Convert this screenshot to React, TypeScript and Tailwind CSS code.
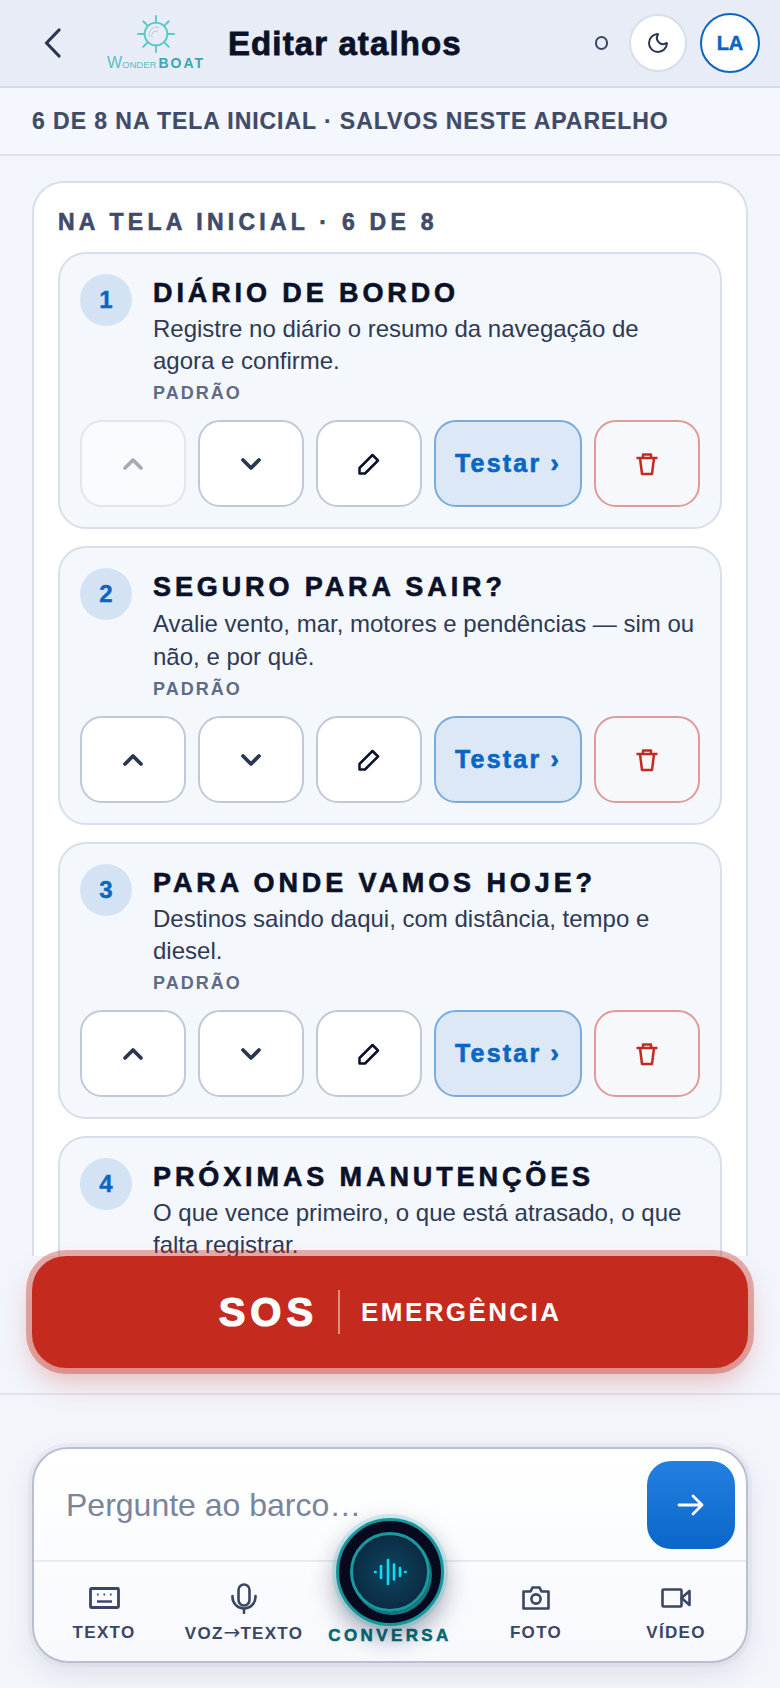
import React from "react";
import { ChevronUp, ChevronDown, Moon } from "lucide-react";

interface Shortcut {
  id: number;
  title: string;
  description: React.ReactNode;
}

const shortcuts: Shortcut[] = [
  { id: 1, title: "DIÁRIO DE BORDO", description: "Registre no diário o resumo da navegação de agora e confirme." },
  {
    id: 2,
    title: "SEGURO PARA SAIR?",
    description: (
      <>
        Avalie vento, mar, motores e pendências <span className="leading-[34px]">—</span> sim ou não, e por quê.
      </>
    ),
  },
  { id: 3, title: "PARA ONDE VAMOS HOJE?", description: "Destinos saindo daqui, com distância, tempo e diesel." },
  { id: 4, title: "PRÓXIMAS MANUTENÇÕES", description: "O que vence primeiro, o que está atrasado, o que falta registrar." },
];

function Logo() {
  const spokes = [0, 45, 90, 135, 180, 225, 270, 315];
  return (
    <div className="flex w-[96px] flex-col items-center">
      <svg width="38" height="38" viewBox="0 0 40 40" fill="none" stroke="#5cc8c8" strokeWidth="2">
        <circle cx="20" cy="20" r="12" />
        {spokes.map((a) => (
          <line key={a} x1="20" y1="8" x2="20" y2="1" transform={`rotate(${a} 20 20)`} strokeLinecap="round" />
        ))}
        <path d="M13 23a8 8 0 0 1 10-10M16 24a5 5 0 0 1 6-7" stroke="#b9c6d4" strokeWidth="1" />
      </svg>
      <div className="mt-[2px] flex items-baseline whitespace-nowrap leading-none text-[#58bfc2]">
        <span className="text-[16px]">W</span>
        <span className="text-[9.5px]">ONDER</span>
        <span className="ml-[2px] text-[14px] font-bold tracking-[2px] text-[#3aa6ae]">BOAT</span>
      </div>
    </div>
  );
}

function PencilIcon() {
  return (
    <svg width="24" height="24" viewBox="0 0 24 24" fill="none" stroke="currentColor" strokeWidth="2.5" strokeLinejoin="round">
      <path d="M2.5 16 L15.5 3 L21 8.5 L8 21.5 L2.5 21.5 Z" />
    </svg>
  );
}

function TrashIcon() {
  return (
    <svg width="24" height="24" viewBox="0 0 24 24" fill="none" stroke="currentColor" strokeWidth="2.5" strokeLinejoin="round">
      <path d="M1.5 6h21M8 6V2.5h8V6M5 6l2 16h10l2-16" />
    </svg>
  );
}

function ShortcutCard({ item }: { item: Shortcut }) {
  const squareBtn = "flex h-[87px] w-[106px] shrink-0 items-center justify-center rounded-[22px] border-2";
  return (
    <div className="rounded-[28px] border-2 border-[#d8dfeb] bg-[#f4f7fc] px-[20px] pb-[20px] pt-[20px]">
      <div className="flex gap-[21px]">
        <div className="flex h-[52px] w-[52px] shrink-0 items-center justify-center rounded-full bg-[#d3e3f4] text-[24px] font-bold text-[#0a66c2] [-webkit-text-stroke:0.4px]">
          {item.id}
        </div>
        <div className="min-w-0 flex-1">
          <div className="text-[27px] font-black leading-[39px] tracking-[3.9px] text-[#0a1128] [-webkit-text-stroke:0.6px]">
            {item.title}
          </div>
          <p className="text-[24px] leading-[32px] text-[#2e3a55]">{item.description}</p>
          <div className="mt-[4px] text-[18px] font-bold leading-[24px] tracking-[2px] text-[#5f6a85]">PADRÃO</div>
        </div>
      </div>
      <div className="mt-[15px] flex gap-[12px]">
        <button className={`${squareBtn} ${item.id === 1 ? "border-[#e0e5ee] bg-[#f8fafd] text-[#a3abb9]" : "border-[#c0c9d8] bg-white text-[#2a3550]"}`}>
          <ChevronUp size={32} strokeWidth={2.8} />
        </button>
        <button className={`${squareBtn} border-[#c0c9d8] bg-white text-[#2a3550]`}>
          <ChevronDown size={32} strokeWidth={2.8} />
        </button>
        <button className={`${squareBtn} border-[#c0c9d8] bg-white text-[#0a1128]`}>
          <PencilIcon />
        </button>
        <button className="flex h-[87px] w-[148px] shrink-0 items-center justify-center rounded-[22px] border-2 border-[#7aabdc] bg-[#dce8f6] text-[25px] font-black tracking-[2.2px] text-[#0a66c2] [-webkit-text-stroke:0.6px]">
          Testar ›
        </button>
        <button className={`${squareBtn} border-[#e09a98] bg-[#f6f8fc] text-[#c42b1f]`}>
          <TrashIcon />
        </button>
      </div>
    </div>
  );
}

function KeyboardIcon() {
  return (
    <svg width="31" height="22" viewBox="0 0 31 22" fill="none" stroke="currentColor" strokeWidth="2.8">
      <rect x="1.5" y="1.5" width="28" height="19" rx="1" />
      <path d="M8 7.5h1.6M14.5 7.5h1.6M21 7.5h1.6" strokeWidth="2" />
      <path d="M8 14.5h15" strokeWidth="2.4" />
    </svg>
  );
}

function MicIcon() {
  return (
    <svg width="26" height="31" viewBox="0 0 26 31" fill="none" stroke="currentColor" strokeWidth="2.6" strokeLinecap="round">
      <rect x="7.5" y="1.5" width="11" height="21" rx="5.5" />
      <path d="M1.5 13v1a11.5 11.5 0 0 0 23 0v-1M13 25.5v4.5" />
    </svg>
  );
}

function CameraIcon() {
  return (
    <svg width="28" height="24" viewBox="0 0 28 24" fill="none" stroke="currentColor" strokeWidth="2.6" strokeLinejoin="round">
      <path d="M8.5 5.5 L10.5 1.5 H17.5 L19.5 5.5 H26.5 V22.5 H1.5 V5.5 Z" />
      <circle cx="14" cy="13" r="4.6" />
    </svg>
  );
}

function VideoIcon() {
  return (
    <svg width="30" height="20" viewBox="0 0 30 20" fill="none" stroke="currentColor" strokeWidth="2.6" strokeLinejoin="round">
      <rect x="1.5" y="1.5" width="19" height="17" rx="1" />
      <path d="M20.5 10 L28.5 3 V17 Z" />
    </svg>
  );
}

function ToolItem({ label, children }: { label: React.ReactNode; children: React.ReactNode }) {
  return (
    <div className="flex flex-col items-center">
      <div className="flex h-[40px] items-center text-[#3a4663]">{children}</div>
      <div className="mt-[4px] whitespace-nowrap text-[17px] font-bold leading-[22px] tracking-[1.3px] text-[#3a4663]">
        {label}
      </div>
    </div>
  );
}

function ConversaOrb() {
  return (
    <div className="absolute left-1/2 top-[69px] flex h-[108px] w-[108px] -translate-x-1/2 items-center justify-center rounded-full border-[3px] border-[#14979c] bg-[#070a1f] shadow-[0_0_0_4px_rgba(40,190,190,0.18),0_10px_26px_rgba(10,20,50,0.4)]">
      <div className="flex h-[80px] w-[80px] items-center justify-center rounded-full border-[3px] border-[#1a9a9e] bg-[radial-gradient(circle,#0d4560_0%,#0a2238_100%)] shadow-[2px_3px_0_#127a80]">
        <svg width="34" height="28" viewBox="0 0 34 28" stroke="#05e0f5" strokeWidth="2.6" strokeLinecap="round">
          <path d="M2 14h.6M8 8v12M15 2v24M21 6.500v15M27 10v8M32 14h.6" />
        </svg>
      </div>
    </div>
  );
}

export default function App() {
  return (
    <div className="flex h-[1688px] w-[780px] flex-col overflow-hidden bg-[#f2f5fc] font-['Liberation_Sans',Arial,sans-serif]">
      <header className="flex h-[88px] shrink-0 items-center border-b-2 border-[#d6dbe8] bg-[#e8ecf6] pl-[44px] pr-[20px]">
        <svg width="17" height="30" viewBox="0 0 17 30" fill="none" stroke="#2a3550" strokeWidth="3.2" strokeLinecap="round" strokeLinejoin="round">
          <path d="M15 2 L2.500 15 L15 28" />
        </svg>
        <div className="ml-[47px]">
          <Logo />
        </div>
        <h1 className="ml-[24px] text-[33px] font-black leading-none tracking-[1.1px] text-[#0a1128] [-webkit-text-stroke:0.8px]">Editar atalhos</h1>
        <div className="ml-auto h-[14px] w-[13px] rounded-full border-[2.5px] border-[#3a4663]" />
        <button className="ml-[21px] flex h-[58px] w-[58px] items-center justify-center rounded-full border-2 border-[#d8deea] bg-white text-[#2a3550]">
          <Moon size={24} strokeWidth={2} />
        </button>
        <button className="ml-[13px] flex h-[60px] w-[60px] items-center justify-center rounded-full border-[2.5px] border-[#0a66c2] bg-white text-[20px] font-bold text-[#0a66c2] [-webkit-text-stroke:0.5px]">
          LA
        </button>
      </header>

      <div className="flex h-[68px] shrink-0 items-center border-b-2 border-[#dde2ed] bg-[#f4f7fe] px-[32px] text-[23px] font-bold tracking-[0.95px] text-[#3f4b68] [-webkit-text-stroke:0.2px]">
        6 DE 8 NA TELA INICIAL · SALVOS NESTE APARELHO
      </div>

      <main className="min-h-0 flex-1 overflow-hidden px-[32px] pt-[25px]">
        <section className="rounded-[32px] border-2 border-[#d8dfeb] bg-white px-[24px] pt-[26px]">
          <div className="text-[23px] font-black leading-[26px] tracking-[4.25px] text-[#3f4b68] [-webkit-text-stroke:0.6px]">
            NA TELA INICIAL · 6 DE 8
          </div>
          <div className="mt-[17px] flex flex-col gap-[17px]">
            {shortcuts.map((item) => (
              <ShortcutCard key={item.id} item={item} />
            ))}
          </div>
        </section>
      </main>

      <div className="relative z-10 shrink-0 px-[32px]">
        <button className="flex h-[112px] w-full items-center justify-center rounded-[34px] bg-[#c42b1e] text-white shadow-[0_0_0_6px_rgba(196,43,30,0.36),0_14px_28px_rgba(196,43,30,0.28)]">
          <span className="text-[40px] font-black leading-none tracking-[5px] [-webkit-text-stroke:1.2px]">SOS</span>
          <span className="ml-[20px] mr-[21px] h-[44px] w-[2px] bg-[#e58d84]" />
          <span className="text-[26px] font-bold tracking-[2.4px]">EMERGÊNCIA</span>
        </button>
      </div>

      <footer className="mt-[25px] h-[295px] shrink-0 border-t-2 border-[#dfe3ee] bg-[#f3f5fb] px-[32px] pt-[52px]">
        <div className="relative h-[216px] rounded-[36px] border-2 border-[#b9bfcf] bg-[linear-gradient(#ffffff,#f7f9fd)] shadow-[0_0_0_4px_rgba(200,205,220,0.22),0_10px_26px_rgba(90,100,130,0.14)]">
          <div className="flex h-[113px] items-center justify-between border-b-2 border-[#e8ebf2] pl-[32px] pr-[11px]">
            <span className="text-[32px] text-[#7a849c]">Pergunte ao barco…</span>
            <button className="flex h-[88px] w-[88px] items-center justify-center rounded-[24px] bg-[linear-gradient(#2480e0,#0a66c8)] text-white">
              <svg width="28" height="24" viewBox="0 0 28 24" fill="none" stroke="currentColor" strokeWidth="2.8" strokeLinecap="round" strokeLinejoin="round">
                <path d="M2 12h23M16 3l9 9-9 9" />
              </svg>
            </button>
          </div>
          <div className="grid grid-cols-[140px_140px_152px_140px_140px] pt-[16px]">
            <ToolItem label="TEXTO"><KeyboardIcon /></ToolItem>
            <ToolItem label={<>VOZ<span className="font-['DejaVu_Sans'] text-[20px] font-normal leading-none tracking-normal">→</span>TEXTO</>}><MicIcon /></ToolItem>
            <div className="flex flex-col items-center pt-[47px]">
              <div className="whitespace-nowrap text-[17px] font-black leading-[22px] tracking-[3.4px] text-[#036b76] [-webkit-text-stroke:0.5px]">
                CONVERSA
              </div>
            </div>
            <ToolItem label="FOTO"><CameraIcon /></ToolItem>
            <ToolItem label="VÍDEO"><VideoIcon /></ToolItem>
          </div>
          <ConversaOrb />
        </div>
      </footer>
    </div>
  );
}
